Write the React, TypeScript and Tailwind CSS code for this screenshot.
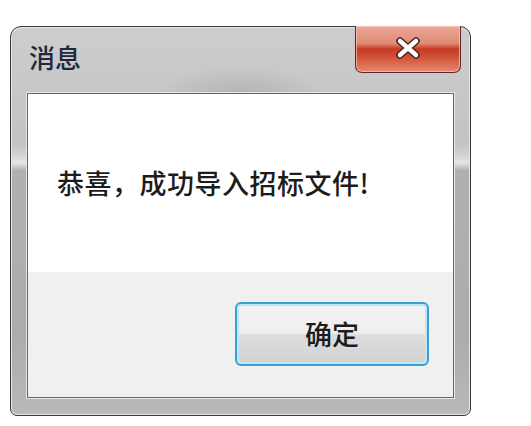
export default function App() {
  return (
    <div className="w-[531px] h-[426px] bg-white pt-[26px] pl-[10px] font-['Noto_Sans_CJK_SC','Noto_Sans',sans-serif]">
      <div className="w-[461px] h-[390px] flex flex-col rounded-t-[11px] rounded-b-[7px] border border-[#3a3a3a] bg-[linear-gradient(to_bottom,#cdcdcd_0%,#c3c3c3_30%,#d2d2d2_33%,#e6e6e6_35%,#b0b0b0_37%,#acacac_80%,#b9b9b9_100%)] px-[16px] pb-[17px] shadow-[inset_0_0_0_1px_#e4e4e4]">
        <div className="h-[66px] flex items-start justify-between bg-[radial-gradient(ellipse_at_50%_100%,#b4b4b4_0%,transparent_28%)]">
          <div className="pl-[2px] pt-[13px] text-[26px] leading-[34px] font-medium text-[#1e2a3a]">消息</div>
          <div className="-mr-[7px] -mt-px w-[106px] h-[47px] rounded-b-[7px] border border-t-0 border-[#5b2a22] bg-[linear-gradient(to_bottom,#eaa897_0%,#df8b75_38%,#c63a22_50%,#d2553a_70%,#e48b72_100%)] shadow-[inset_0_0_0_1px_rgba(255,210,200,0.6)] flex items-center justify-center">
            <svg width="28" height="22" viewBox="0 0 28 22" className="-mt-[3px]">
              <path d="M6 4 L22 18 M22 4 L6 18" stroke="#4a2420" strokeWidth="7.5" strokeLinecap="round" />
              <path d="M6 4 L22 18 M22 4 L6 18" stroke="#ffffff" strokeWidth="4.5" strokeLinecap="round" />
            </svg>
          </div>
        </div>
        <div className="flex-1 flex flex-col border border-[#666] shadow-[0_0_0_1px_#e8e8e8]">
          <div className="h-[178px] bg-white pl-[29px] pt-[71px]">
            <div className="text-[27px] leading-[35px] tracking-[0.5px] font-medium text-[#1c1c1c]">恭喜，成功导入招标文件!</div>
          </div>
          <div className="flex-1 bg-[#f0f0f0] flex justify-end items-start pt-[30px] pr-[24px]">
            <div className="w-[194px] h-[64px] rounded-[6px] border-2 border-[#3c9fd2] shadow-[inset_0_0_0_2px_#bfe6f7] bg-[linear-gradient(to_bottom,#f4f4f4_0%,#eeeeee_48%,#dddddd_52%,#d2d2d2_100%)] flex items-center justify-center">
              <span className="text-[27px] leading-[34px] font-medium text-[#1c1c1c]">确定</span>
            </div>
          </div>
        </div>
      </div>
    </div>
  );
}
